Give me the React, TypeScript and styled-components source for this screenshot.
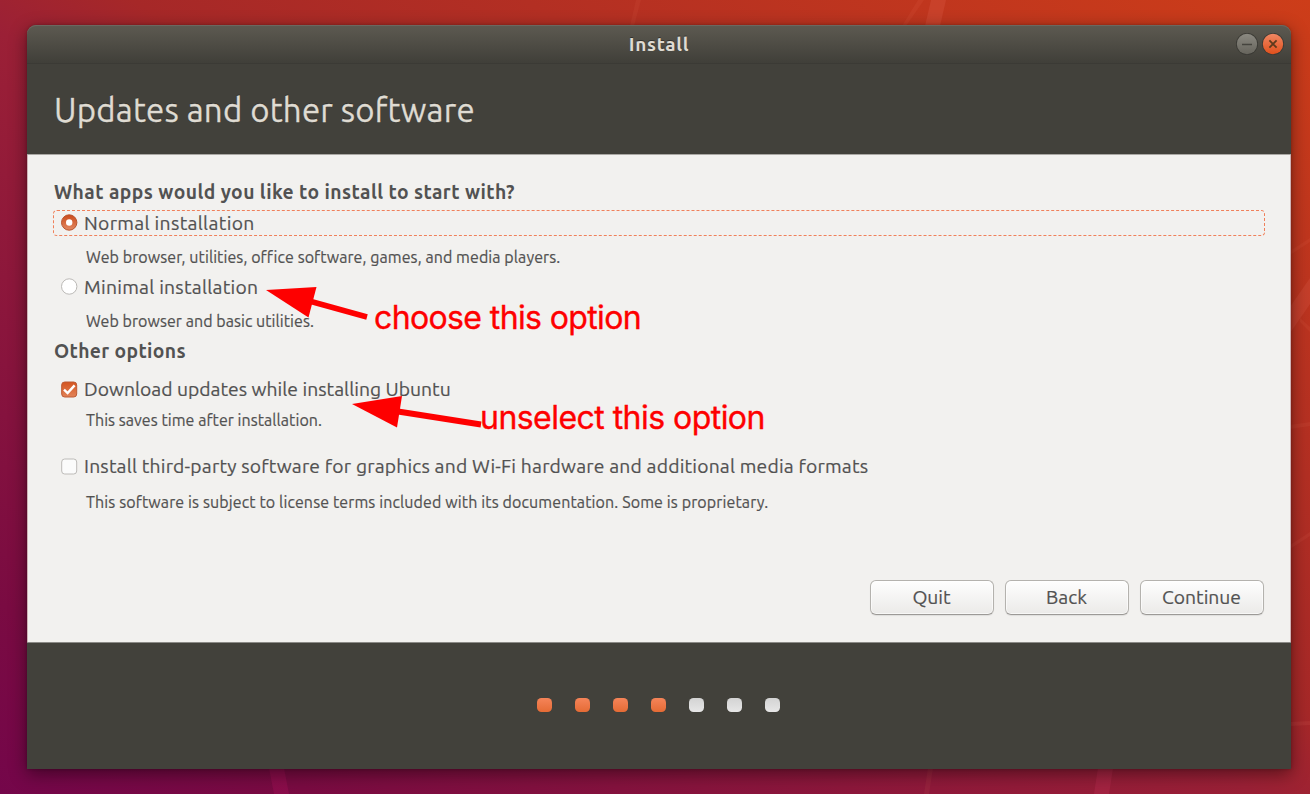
import React from "react";
import styled, { createGlobalStyle } from "styled-components";

const GlobalStyle = createGlobalStyle`
  * { box-sizing: border-box; }
  body { margin: 0; font-family: Ubuntu, "Noto Sans", sans-serif; color: #525252; }
`;

const Desktop = styled.div`
  position: relative;
  width: 1310px;
  height: 794px;
  padding: 25px 19px 25px 27px;
  overflow: hidden;
  background: linear-gradient(to top right, #74064a 0%, #7a0b42 12%, #9b2036 48%, #a62828 55%, #cd3d19 100%);
`;

const Wallpaper = styled.svg`
  position: absolute;
  inset: 0;
`;

const Window = styled.main`
  position: relative;
  display: flex;
  flex-direction: column;
  width: 1264px;
  height: 744px;
  border-radius: 9px 9px 0 0;
  box-shadow: 0 5px 18px rgba(0, 0, 0, 0.45), 0 0 3px rgba(0, 0, 0, 0.25);
`;

const TitleBar = styled.header`
  display: grid;
  grid-template-columns: 1fr auto 1fr;
  align-items: center;
  height: 39px;
  padding: 0 7px;
  border-radius: 9px 9px 0 0;
  border-bottom: 1px solid #3b3a35;
  background: linear-gradient(#5d5a51, #403f39);
  box-shadow: inset 0 1px #6b6860;
`;

const WindowTitle = styled.span`
  grid-column: 2;
  font-size: 19px;
  font-weight: 700;
  line-height: 38px;
  letter-spacing: 0.7px;
  color: #dfdbd2;
  text-shadow: 0 -1px #33322e;
`;

const WindowButtons = styled.div`
  display: flex;
  justify-content: flex-end;
  gap: 4px;
`;

const Banner = styled.div`
  display: flex;
  align-items: center;
  height: 91px;
  padding: 2px 0 0 27px;
  background: #42413b;
  border-bottom: 1px solid #aaa8a4;
`;

const BannerTitle = styled.h1`
  margin: 0;
  font-size: 33px;
  font-weight: 400;
  line-height: 44px;
  letter-spacing: 0.2px;
  color: #dfdbd2;
  -webkit-text-stroke: 0.3px #dfdbd2;
  text-shadow: 0 -1px #2e2d29;
  white-space: nowrap;
`;

const Content = styled.section`
  display: flex;
  flex-direction: column;
  height: 487px;
  padding: 24px 25px 0;
  border: solid #cfb3b6;
  border-width: 0 1px;
  background: #f2f1ef;
`;

const Heading = styled.h2<{ $top?: number; $spacing: number }>`
  margin: ${(p) => p.$top ?? 0}px 0 0;
  height: 27px;
  padding-left: 1px;
  font-size: 19.3px;
  font-weight: 700;
  line-height: 27px;
  letter-spacing: ${(p) => p.$spacing}px;
`;

const Option = styled.div<{ $top: number; $focused?: boolean }>`
  display: flex;
  align-items: center;
  gap: 6px;
  height: 26px;
  margin-top: ${(p) => p.$top}px;
  padding-left: 7px;
  border: 1px dashed ${(p) => (p.$focused ? "#f0805a" : "transparent")};
  border-radius: 4px;
`;

const Label = styled.span<{ $spacing: number }>`
  font-size: 19.3px;
  line-height: 24px;
  letter-spacing: ${(p) => p.$spacing}px;
  -webkit-text-stroke: 0.2px #525252;
  white-space: nowrap;
`;

const Note = styled.p<{ $top: number; $spacing: number }>`
  height: 20px;
  margin: ${(p) => p.$top}px 0 0 33px;
  font-size: 16px;
  line-height: 20px;
  letter-spacing: ${(p) => p.$spacing}px;
  -webkit-text-stroke: 0.2px #525252;
  white-space: nowrap;
`;

const Actions = styled.div`
  display: flex;
  justify-content: flex-end;
  gap: 11px;
  margin: 68px 1px 0 0;
`;

const Button = styled.button`
  width: 124px;
  height: 35px;
  padding: 0 1px 2px 0;
  border: 1px solid #b4b2ae;
  border-bottom-color: #9c9a97;
  border-radius: 6px;
  background: linear-gradient(#fefefe, #ebeae8);
  box-shadow: inset 0 0 0 1px rgba(255, 255, 255, 0.6), 0 1px 1px rgba(0, 0, 0, 0.08);
  color: #525252;
  font: 400 19.3px/30px Ubuntu, "Noto Sans", sans-serif;
  -webkit-text-stroke: 0.2px #525252;
`;

const Footer = styled.footer`
  display: flex;
  flex: 1;
  align-items: center;
  justify-content: center;
  gap: 23px;
  padding: 0 1px 2px 0;
  border-top: 1px solid #8b8a86;
  background: #42413b;
`;

const Step = styled.i<{ $done: boolean }>`
  width: 15px;
  height: 14px;
  border-radius: 4.5px;
  background: ${(p) => (p.$done ? "linear-gradient(#f58459, #e56b35)" : "linear-gradient(#d3d3d3, #e6e6e6)")};
`;

const Marks = styled.svg`
  position: absolute;
  inset: 0;
`;

const Remark = styled.span<{ $x: number; $y: number; $spacing: number }>`
  position: absolute;
  left: ${(p) => p.$x}px;
  top: ${(p) => p.$y}px;
  font: 400 32px/40px Inter, sans-serif;
  letter-spacing: ${(p) => p.$spacing}px;
  color: #fe0000;
  -webkit-text-stroke: 0.35px #fe0000;
  white-space: nowrap;
`;

const Indicator = styled.svg<{ $lift?: number }>`
  flex: none;
  width: 17px;
  height: 17px;
  margin: ${(p) => -(p.$lift ?? 0)}px 0 ${(p) => p.$lift ?? 0}px;
`;

const Radio = ({ on }: { on?: boolean }) => (
  <Indicator $lift={1} viewBox="0 0 17 17">
    <defs>
      <linearGradient id="radioOn" x2="0" y2="1">
        <stop stopColor="#cb4a1a" />
        <stop offset="1" stopColor="#e28a64" />
      </linearGradient>
    </defs>
    <circle cx="8.2" cy="8.5" r="7.7" fill={on ? "url(#radioOn)" : "#fff"} stroke={on ? "#b9552f" : "#bbb9b6"} strokeWidth="1" />
    {on && <circle cx="8.2" cy="8.5" r="3.2" fill="#fff" />}
  </Indicator>
);

const Check = ({ on }: { on?: boolean }) => (
  <Indicator viewBox="0 0 17 17">
    <defs>
      <linearGradient id="checkOn" x2="0" y2="1">
        <stop stopColor="#d4541f" />
        <stop offset="1" stopColor="#e28358" />
      </linearGradient>
    </defs>
    <rect x="0.7" y="1" width="15" height="15" rx="3" fill={on ? "url(#checkOn)" : "#fbfbfb"} stroke={on ? "#bd5a34" : "#bdbbb8"} />
    {on && <path d="M3 8.6 L6.6 12 L13.6 4.4" fill="none" stroke="#fff" strokeWidth="2.4" />}
  </Indicator>
);

const TitleIcon = ({ close }: { close?: boolean }) => (
  <svg width="22" height="24" viewBox="0 0 22 24">
    <defs>
      <linearGradient id="closeFill" x2="0" y2="1">
        <stop stopColor="#f08763" />
        <stop offset="1" stopColor="#e0501c" />
      </linearGradient>
      <linearGradient id="minFill" x2="0" y2="1">
        <stop stopColor="#8b8981" />
        <stop offset="1" stopColor="#66645c" />
      </linearGradient>
    </defs>
    <circle cx="11" cy="12" r="11" fill="#3a3934" />
    <circle cx="11" cy="12" r="10.2" fill={close ? "url(#closeFill)" : "url(#minFill)"} />
    {close ? (
      <path d="M7.4 8.4 L14.6 15.6 M14.6 8.4 L7.4 15.6" stroke="#5e3a1c" strokeWidth="1.8" />
    ) : (
      <path d="M6 12.5 H16" stroke="#45443e" strokeWidth="1.5" />
    )}
  </svg>
);

const steps = [true, true, true, true, false, false, false];

export default function App() {
  return (
    <Desktop>
      <GlobalStyle />
      <Wallpaper width="1310" height="794">
        <g fill="#ff8c78" fillOpacity="0.13">
          <path d="M931 0 H946 L940 26 H925 Z" />
          <path d="M269 768 H284 L289 794 H274 Z" fill="#ff2080" />
          <path d="M1098 768 H1113 L1109 794 H1094 Z" fill="#ff5080" />
          <path d="M636 0 H641 L634 26 H630 Z" fillOpacity="0.07" />
          <path d="M918 0 H924 L906 26 H902 Z" fillOpacity="0.08" />
          <path d="M1290 251 L1310 238 V242 L1290 255 Z" fillOpacity="0.08" />
          <path d="M1290 307 L1310 278 V304 L1290 333 Z" fillOpacity="0.12" />
          <path d="M1300 318 L1310 327 V332 L1300 322 Z" fillOpacity="0.08" />
          <path d="M1290 425 L1310 422 V426 L1290 429 Z" fillOpacity="0.08" />
          <path d="M1290 545 L1310 532 V536 L1290 549 Z" fillOpacity="0.08" />
          <path d="M1290 722 L1310 721 V725 L1290 726 Z" fillOpacity="0.09" />
          <path d="M928 768 H933 L929 794 H924 Z" fillOpacity="0.07" />
        </g>
      </Wallpaper>
      <Window>
        <TitleBar>
          <WindowTitle>Install</WindowTitle>
          <WindowButtons>
            <TitleIcon />
            <TitleIcon close />
          </WindowButtons>
        </TitleBar>
        <Banner>
          <BannerTitle>Updates and other software</BannerTitle>
        </Banner>
        <Content>
          <Heading $spacing={0.43}>What apps would you like to install to start with?</Heading>
          <Option $top={4} $focused>
            <Radio on />
            <Label $spacing={0.32}>Normal installation</Label>
          </Option>
          <Note $top={11} $spacing={0.08}>Web browser, utilities, office software, games, and media players.</Note>
          <Option $top={7}>
            <Radio />
            <Label $spacing={0.25}>Minimal installation</Label>
          </Option>
          <Note $top={11} $spacing={0.05}>Web browser and basic utilities.</Note>
          <Heading $top={7} $spacing={0.36}>Other options</Heading>
          <Option $top={11}>
            <Check on />
            <Label $spacing={0.02}>Download updates while installing Ubuntu</Label>
          </Option>
          <Note $top={8} $spacing={0.05}>This saves time after installation.</Note>
          <Option $top={23}>
            <Check />
            <Label $spacing={0.19}>Install third-party software for graphics and Wi-Fi hardware and additional media formats</Label>
          </Option>
          <Note $top={13} $spacing={0.12}>This software is subject to license terms included with its documentation. Some is proprietary.</Note>
          <Actions>
            <Button>Quit</Button>
            <Button>Back</Button>
            <Button>Continue</Button>
          </Actions>
        </Content>
        <Footer>
          {steps.map((done, i) => (
            <Step key={i} $done={done} />
          ))}
        </Footer>
      </Window>
      <Marks width="1310" height="794" fill="#fe0000" stroke="#fe0000">
        <path d="M266 290 L316.500 287 L308.500 317.500 Z" stroke="none" />
        <path d="M311 301.500 L367 317" strokeWidth="5.500" fill="none" />
        <path d="M352 404 L402 396 L397 427.500 Z" stroke="none" />
        <path d="M398 411.500 L481 424.500" strokeWidth="6" fill="none" />
      </Marks>
      <Remark $x={374} $y={298} $spacing={-0.62}>choose this option</Remark>
      <Remark $x={480} $y={398} $spacing={-0.54}>unselect this option</Remark>
    </Desktop>
  );
}
